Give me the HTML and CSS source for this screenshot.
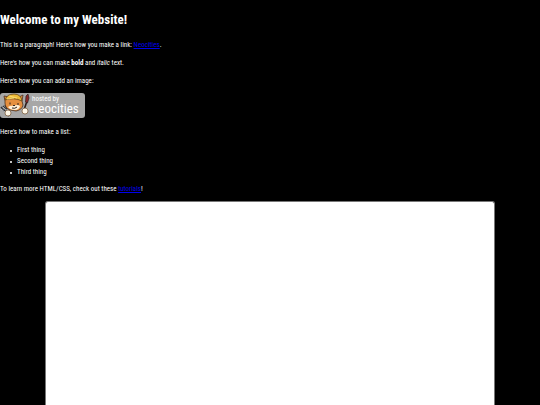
FILE: index.html
```html
<!DOCTYPE html>
<html lang="en">
<head>
<meta charset="utf-8">
<title>Welcome to my Website!</title>
<link rel="stylesheet" href="styles.css">
</head>
<body>
<main class="content">
  <h1>Welcome to my Website!</h1>
  <p>This is a paragraph! Here's how you make a link: <a href="#neocities">Neocities</a>.</p>
  <p>Here's how you can make <strong>bold</strong> and <em>italic</em> text.</p>
  <p>Here's how you can add an image:</p>
  <div class="badge">
    <svg class="cat" viewBox="0 0 31 25" aria-hidden="true">
      <path d="M1 14l3 4M3 13l3 4M5 12l2 4M4 17l5 6" stroke="#303238" stroke-width="1.4" fill="none"/>
      <path d="M1 16l4 3M3 14l3 3M5 19l3 4" stroke="#d8dadd" stroke-width=".7"/>
      <path d="M24 17L27 8" stroke="#2b1b1b" stroke-width="1.6"/>
      <path d="M25.500 9L26 3l2-2 1 4-1.500 5z" fill="#8d2828" stroke="#2e2020" stroke-width=".7"/>
      <path d="M5 8L4 3l5 1Q14-1 19 4l4-2-1 6 1 4Q22 17 16 18l-6-1Q5 15 5 10z" fill="#e58f3f" stroke="#49301f" stroke-width=".8"/>
      <path d="M5 7Q7 1 14 1q7 0 8 7-8-4-17-1z" fill="#edb936" stroke="#604318" stroke-width=".8"/>
      <path d="M9 3l8 2M7 6l7-1" stroke="#ffe783" stroke-width=".8"/>
      <path d="M8 14q3-2 6-1 3-2 6 0-1 4-5 4-5 0-7-3z" fill="#fff0d9"/>
      <path d="M10 9.500v2M18 10v2M13 12.500h2M12 15q3 1 5-1" stroke="#302520" stroke-width="1" fill="none"/>
      <circle cx="8" cy="20" r="3" fill="#fff8e8" stroke="#73502e" stroke-width=".7"/>
      <circle cx="25" cy="18" r="3" fill="#fff8e8" stroke="#73502e" stroke-width=".7"/>
    </svg>
    <span class="badge-text"><span class="hosted">hosted by</span><span class="brand">neocities</span></span>
  </div>
  <p>Here's how to make a list:</p>
  <ul>
    <li>First thing</li>
    <li>Second thing</li>
    <li>Third thing</li>
  </ul>
  <p>To learn more HTML/CSS, check out these <a href="#tutorials">tutorials</a>!</p>
</main>
<section class="panel" aria-label="Embedded content"></section>
</body>
</html>
```
FILE: styles.css
```css
* {
  box-sizing: border-box;
}

body {
  display: flex;
  flex-direction: column;
  min-height: 100vh;
  margin: 0;
  background: #000;
  color: #fff;
  font-family: "Roboto Condensed", Roboto, sans-serif;
  font-size: 7px;
  line-height: 11px;
}

h1 {
  margin: 10px 0;
  font-size: 13px;
  line-height: 20px;
}

p {
  margin: 7px 0 6px;
}

a {
  color: #00e;
}

ul {
  margin: 7px 0 6px;
  padding-left: 10px;
  list-style: none;
}

li {
  display: flex;
  align-items: center;
  gap: 5px;
}

li::before {
  content: "";
  width: 2px;
  height: 2px;
  border-radius: 1px;
  background: #fff;
}

.content p:last-child {
  margin: 6px 0;
}

.badge {
  display: flex;
  width: 85px;
  height: 25px;
  margin: 6px 0 9px;
  border-radius: 3px;
  background: #a7a7a7;
}

.cat {
  width: 31px;
  height: 25px;
}

.badge-text {
  display: flex;
  flex-direction: column;
  padding: 3px 0 0 1px;
}

.hosted {
  font-size: 7px;
  line-height: 7px;
}

.brand {
  font-size: 13px;
  line-height: 11px;
}

.panel {
  flex: 1;
  width: 83.2%;
  margin: 0 auto;
  border: 1px solid #777;
  border-bottom: 0;
  border-radius: 3px 3px 0 0;
  background: #fff;
}
```
